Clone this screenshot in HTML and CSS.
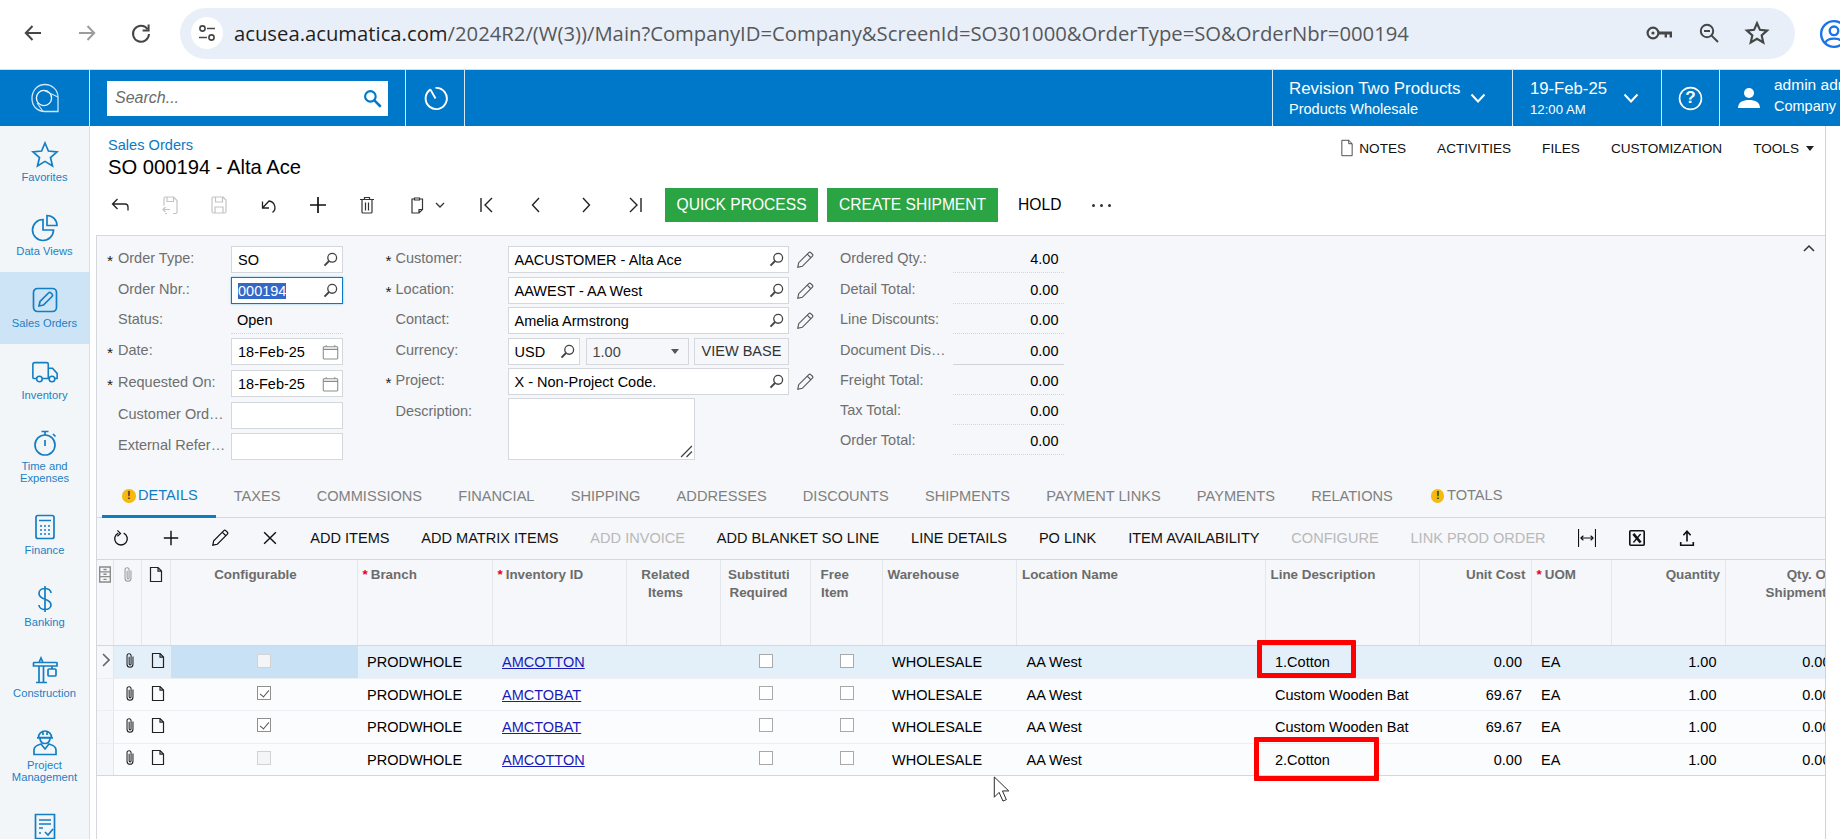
FILE: index.html
```html
<!DOCTYPE html>
<html lang="en">
<head>
<meta charset="utf-8">
<title>SO 000194 - Alta Ace</title>
<link rel="stylesheet" href="styles.css">
</head>
<body>
<svg class="sprite" aria-hidden="true">
  <symbol id="i-search" viewBox="0 0 16 16"><circle cx="9.8" cy="6.2" r="4.7" fill="none" stroke="currentColor" stroke-width="1.4"/><path d="M6.4 9.6 1.6 14.6" stroke="currentColor" stroke-width="2" fill="none"/></symbol>
  <symbol id="i-pencil" viewBox="0 0 16 16"><path d="M1.600 14.400 2.400 10.400 11.400 1.400a1.200 1.200 0 0 1 1.700 0l1.500 1.500a1.200 1.200 0 0 1 0 1.700L5.600 13.600Z M10 2.800 13.200 6" fill="none" stroke="currentColor" stroke-width="1"/></symbol>
  <symbol id="i-clip" viewBox="0 0 12 16"><path d="M8.800 4.200v7.400a2.800 2.800 0 0 1-5.600 0V3.600a1.900 1.900 0 0 1 3.800 0v7.600a.9.9 0 0 1-1.800 0V4.500" fill="none" stroke="currentColor" stroke-width="1"/></symbol>
  <symbol id="i-doc" viewBox="0 0 14 16"><path d="M1.500 1h7.600l3.400 3.600V15h-11Z M9 1v3.700h3.500" fill="none" stroke="currentColor" stroke-width="1.200"/></symbol>
  <symbol id="i-cal" viewBox="0 0 16 16"><path d="M2 3.500h12a.8.8 0 0 1 .8.8v9.900a.8.8 0 0 1-.8.8H2a.8.8 0 0 1-.8-.8V4.300a.8.8 0 0 1 .8-.8Z M1.200 6h13.600 M4 2v1.500M12 2v1.500" fill="none" stroke="currentColor" stroke-width="1"/></symbol>
</svg>

<header class="browser">
  <svg class="bi bi-back" viewBox="0 0 24 24"><path d="M20 12H5M11.500 5 4.800 12l6.700 7" fill="none" stroke="#444746" stroke-width="2"/></svg>
  <svg class="bi bi-fwd" viewBox="0 0 24 24"><path d="M4 12h15M12.500 5l6.700 7-6.700 7" fill="none" stroke="#9a9c9e" stroke-width="2"/></svg>
  <svg class="bi bi-reload" viewBox="0 0 24 24"><path d="M18.600 8.200A8 8 0 1 0 20 13" fill="none" stroke="#444746" stroke-width="2"/><path d="M19.600 3.600v6h-6" fill="none" stroke="#444746" stroke-width="2"/></svg>
  <div class="pill">
    <span class="tune"><svg viewBox="0 0 20 20" width="20" height="20"><circle cx="5.500" cy="5.500" r="2.600" fill="none" stroke="#444746" stroke-width="1.600"/><path d="M10 5.500h8M2 14.500h8" stroke="#444746" stroke-width="1.600"/><circle cx="14.500" cy="14.500" r="2.600" fill="none" stroke="#444746" stroke-width="1.600"/></svg></span>
    <span class="url"><span class="host">acusea.acumatica.com</span>/2024R2/(W(3))/Main?CompanyID=Company&amp;ScreenId=SO301000&amp;OrderType=SO&amp;OrderNbr=000194</span>
    <span class="pill-icons">
      <svg viewBox="0 0 28 20" width="28" height="20"><circle cx="7" cy="10" r="5.400" fill="none" stroke="#444746" stroke-width="2.200"/><circle cx="7" cy="10" r="1.600" fill="#444746"/><path d="M12 8.400h14v6h-2.400v-3H21v3h-2.400v-3H12Z" fill="#444746"/></svg>
      <svg viewBox="0 0 24 24" width="24" height="24"><circle cx="10" cy="10" r="6.200" fill="none" stroke="#444746" stroke-width="2"/><path d="M7 10h6M14.600 14.600 21 21" stroke="#444746" stroke-width="2"/></svg>
      <svg viewBox="0 0 24 24" width="26" height="26"><path d="m12 3 2.700 6.100 6.600.7-5 4.400 1.500 6.500L12 17.300l-5.800 3.400 1.500-6.500-5-4.400 6.600-.7Z" fill="none" stroke="#444746" stroke-width="2"/></svg>
    </span>
  </div>
  <svg class="bi bi-profile" viewBox="0 0 28 28"><circle cx="14" cy="14" r="12" fill="none" stroke="#1a73e8" stroke-width="2.200"/><circle cx="14" cy="11" r="4" fill="none" stroke="#1a73e8" stroke-width="2.200"/><path d="M6 22c2-5 14-5 16 0" fill="none" stroke="#1a73e8" stroke-width="2.200"/></svg>
</header>

<nav class="topbar">
  <div class="tb-logo"><svg viewBox="0 0 32 30" width="32" height="30"><path d="M16 1.500C8 1.500 3 8 3 15.500S8 28.500 16 28.500H29V14C29 7 23 1.500 16 1.500Z" fill="none" stroke="#cfe6f7" stroke-width="1.300"/><circle cx="15" cy="15" r="7.600" fill="none" stroke="#fff" stroke-width="1.300"/><path d="M15 7.400 29 14M8 20l6 8.400" fill="none" stroke="#cfe6f7" stroke-width="1.100"/></svg></div>
  <div class="tb-search">
    <div class="search-box"><span class="search-ph">Search...</span><svg viewBox="0 0 18 18" width="19" height="19"><circle cx="7" cy="7" r="5" fill="none" stroke="#0078c9" stroke-width="2"/><path d="m10.800 10.800 6 6" stroke="#0078c9" stroke-width="2.400"/></svg></div>
  </div>
  <div class="tb-clock"><svg viewBox="0 0 28 28" width="27" height="27"><path d="M9 4.600A11 11 0 1 0 14 3" fill="none" stroke="#fff" stroke-width="2"/><path d="M8.800 4.800 14 14" stroke="#fff" stroke-width="2"/></svg></div>
  <div class="tb-spacer"></div>
  <div class="tb-company">
    <div class="tb-two"><span class="tb-big">Revision Two Products</span><span class="tb-small">Products Wholesale</span></div>
    <svg class="chev" viewBox="0 0 16 10" width="16" height="10"><path d="m1.500 1.500 6.500 7 6.500-7" fill="none" stroke="#fff" stroke-width="2"/></svg>
  </div>
  <div class="tb-date">
    <div class="tb-two"><span class="tb-date-big">19-Feb-25</span><span class="tb-time">12:00 AM</span></div>
    <svg class="chev" viewBox="0 0 16 10" width="16" height="10"><path d="m1.500 1.500 6.500 7 6.500-7" fill="none" stroke="#fff" stroke-width="2"/></svg>
  </div>
  <div class="tb-help"><svg viewBox="0 0 24 24" width="25" height="25"><circle cx="12" cy="12" r="10.500" fill="none" stroke="#fff" stroke-width="1.600"/></svg><span class="tb-q">?</span></div>
  <div class="tb-user">
    <svg class="tb-user-ico" viewBox="0 0 24 24" width="24" height="24"><circle cx="12" cy="7" r="5" fill="#fff"/><path d="M1 22c0-6 5-8 11-8s11 2 11 8Z" fill="#fff"/></svg>
    <div class="tb-two tb-user-text"><span class="tb-admin">admin admin</span><span class="tb-company-name">Company</span></div>
  </div>
</nav>

<div class="app">
  <aside class="side">
    <a class="side-item side-fav"><svg class="side-ico" viewBox="0 0 28 28"><path d="m14 2 3.400 8 8.600.8-6.500 5.700 2 8.500L14 20.400 6.500 25l2-8.500L2 10.800l8.600-.8Z"/></svg><span>Favorites</span></a>
    <a class="side-item"><svg class="side-ico" viewBox="0 0 28 28"><path d="M12 5.500a10.500 10.500 0 1 0 10.500 10.500H12Z M16 1.500a10 10 0 0 1 10 10H16Z"/></svg><span>Data Views</span></a>
    <a class="side-item side-active"><svg class="side-ico" viewBox="0 0 28 28"><rect x="2.500" y="2.500" width="23" height="23" rx="4"/><path d="m8 20 1-4.500 8.500-8.500a1.800 1.800 0 0 1 2.500 0l1 1a1.800 1.800 0 0 1 0 2.500L12.500 19Z"/></svg><span>Sales Orders</span></a>
    <a class="side-item"><svg class="side-ico" viewBox="0 0 30 28"><path d="M6 21H3.500A1.500 1.500 0 0 1 2 19.500V6a2 2 0 0 1 2-2h13a1.500 1.500 0 0 1 1.500 1.500V21H12 M18.500 10h4.500l5 5.500V21h-2.500"/><circle cx="9" cy="21.500" r="3"/><circle cx="22.500" cy="21.500" r="3"/></svg><span>Inventory</span></a>
    <a class="side-item"><svg class="side-ico" viewBox="0 0 28 28"><circle cx="14" cy="16" r="10"/><path d="M10.500 2.500h7M14 2.500V6M22 5l2.500 2.500M14 11v6"/></svg><span>Time and<br>Expenses</span></a>
    <a class="side-item"><svg class="side-ico" viewBox="0 0 28 28"><rect x="5" y="2.500" width="18" height="23" rx="2"/><path d="M8 7.500h12M9 13h2M13 13h2M17 13h2M9 17h2M13 17h2M17 17h2M9 21h2M13 21h2M17 21h2"/></svg><span>Finance</span></a>
    <a class="side-item"><svg class="side-ico" viewBox="0 0 28 28"><path d="M20 8c0-3-3-4.500-6-4.500S8 5 8 8.500c0 7 12 4.500 12 11.500 0 3-3 4.500-6 4.500S8 23 8 20M14 1v26"/></svg><span>Banking</span></a>
    <a class="side-item"><svg class="side-ico" viewBox="0 0 28 28"><path d="M3 6.500h22.500a.5.5 0 0 1 .5.500v3H2.500V7ZM8 6.500 10 2l2 4.500M8 10v16M12.500 10v16M5 26.500h11M21 10v3"/><rect x="17" y="13" width="8" height="7" rx="1"/></svg><span>Construction</span></a>
    <a class="side-item"><svg class="side-ico" viewBox="0 0 28 28"><path d="M7.500 9.500a6.500 6.500 0 0 1 13 0ZM6 9.800h16M12 3.200V7M16 3.200V7M9 10.500a5 5 0 0 0 10 0M3 26.500v-4.500c0-3.500 3-5 7-6l4 5 4-5c4 1 7 2.500 7 6v4.500Z"/></svg><span>Project<br>Management</span></a>
    <a class="side-item"><svg class="side-ico" viewBox="0 0 28 28"><path d="M4.500 2.500h19v24h-19ZM8 8h12M8 12h12M8 16h4M8 21h2M14 20l3 3 5-6"/></svg></a>
  </aside>

  <main class="main">
    <div class="page-head">
      <div class="crumbs">
        <a class="crumb">Sales Orders</a>
        <h1 class="title">SO 000194 - Alta Ace</h1>
      </div>
      <div class="head-links">
        <svg class="ico-notes" viewBox="0 0 14 20" width="12" height="18"><path d="M1 1h8l4 4v14H1Z M9 1v4h4" fill="none" stroke="#333" stroke-width="1"/></svg>
        <span class="notes-txt">NOTES</span><span>ACTIVITIES</span><span>FILES</span><span>CUSTOMIZATION</span><span class="tools">TOOLS</span><span class="tools-caret"></span>
      </div>
    </div>

    <div class="toolbar">
      <svg class="tb-i" viewBox="0 0 20 20"><path d="M18 15.500V12a3 3 0 0 0-3-3H2.500M7.500 4 2.500 9l5 5" fill="none" stroke="#222" stroke-width="1.300"/></svg>
      <svg class="tb-i" viewBox="0 0 20 20"><path d="M4 10.500V3.500A1.500 1.500 0 0 1 5.500 2h8L17 5.500V17a1.500 1.500 0 0 1-1.500 1.500H13M7 2v4.500h6.500V2M3 14.500h7M5.500 12 3 14.500 5.500 17M5 18.500h2" fill="none" stroke="#c4c4c4" stroke-width="1.200"/></svg>
      <svg class="tb-i" viewBox="0 0 20 20"><path d="M4.500 2H14l3 3v11.500a1.500 1.500 0 0 1-1.500 1.500h-11A1.500 1.500 0 0 1 3 16.500v-13A1.500 1.500 0 0 1 4.500 2Z M6.500 2v5h7V2 M6 18v-6h8v6" fill="none" stroke="#c4c4c4" stroke-width="1.200"/></svg>
      <svg class="tb-i" viewBox="0 0 20 20"><path d="M3.500 6.500V13H10M3.500 13 10 6a6.500 6.500 0 0 1 3.500 11.500" fill="none" stroke="#222" stroke-width="1.300"/></svg>
      <svg class="tb-i" viewBox="0 0 20 20"><path d="M10 2v16M2 10h16" stroke="#111" stroke-width="1.700"/></svg>
      <svg class="tb-i" viewBox="0 0 20 20"><path d="M3 4.500h14M7.500 4.500V2.500h5v2M5 4.500h10v12.500a1 1 0 0 1-1 1H6a1 1 0 0 1-1-1ZM8.500 7.500v8M11.500 7.500v8" fill="none" stroke="#333" stroke-width="1.200"/></svg>
      <div class="tb-paste">
        <svg class="tb-i" viewBox="0 0 20 20"><path d="M7.500 3h5v2h-5ZM7.500 4H5v14h7l3.500-3.500V4h-3M12 18v-3.500h3.500" fill="none" stroke="#333" stroke-width="1.200"/></svg>
        <svg class="tb-small-chev" viewBox="0 0 10 6" width="10" height="6"><path d="m1 1 4 4 4-4" fill="none" stroke="#333" stroke-width="1.300"/></svg>
      </div>
      <svg class="tb-i" viewBox="0 0 20 20"><path d="M4 3v14M15 3 8 10l7 7" fill="none" stroke="#222" stroke-width="1.400"/></svg>
      <svg class="tb-i" viewBox="0 0 20 20"><path d="M13 3 6.500 10l6.500 7" fill="none" stroke="#222" stroke-width="1.400"/></svg>
      <svg class="tb-i" viewBox="0 0 20 20"><path d="m7 3 6.500 7L7 17" fill="none" stroke="#222" stroke-width="1.400"/></svg>
      <svg class="tb-i" viewBox="0 0 20 20"><path d="M16 3v14M5 3l7 7-7 7" fill="none" stroke="#222" stroke-width="1.400"/></svg>
      <button class="btn-green btn-quick">QUICK PROCESS</button>
      <button class="btn-green btn-ship">CREATE SHIPMENT</button>
      <span class="tb-hold">HOLD</span>
      <span class="tb-dots"><i></i><i></i><i></i></span>
    </div>

    <section class="panel">
      <div class="form">
        <div class="col col-a">
          <div class="row"><span class="star">*</span><label class="lbl">Order Type:</label><div class="fld"><span class="fv">SO</span><svg class="f-ico"><use href="#i-search"/></svg></div></div>
          <div class="row"><span class="star"></span><label class="lbl">Order Nbr.:</label><div class="fld fld-focus"><span class="fv"><span class="sel">000194</span></span><svg class="f-ico"><use href="#i-search"/></svg></div></div>
          <div class="row"><span class="star"></span><label class="lbl">Status:</label><div class="fld-ro">Open</div></div>
          <div class="row"><span class="star">*</span><label class="lbl">Date:</label><div class="fld"><span class="fv">18-Feb-25</span><svg class="f-ico f-cal"><use href="#i-cal"/></svg></div></div>
          <div class="row"><span class="star">*</span><label class="lbl">Requested On:</label><div class="fld"><span class="fv">18-Feb-25</span><svg class="f-ico f-cal"><use href="#i-cal"/></svg></div></div>
          <div class="row"><span class="star"></span><label class="lbl">Customer Order Nbr.:</label><div class="fld"></div></div>
          <div class="row"><span class="star"></span><label class="lbl">External Reference:</label><div class="fld"></div></div>
        </div>
        <div class="col col-b">
          <div class="row"><span class="star">*</span><label class="lbl">Customer:</label><div class="fld"><span class="fv">AACUSTOMER - Alta Ace</span><svg class="f-ico"><use href="#i-search"/></svg></div><svg class="pen"><use href="#i-pencil"/></svg></div>
          <div class="row"><span class="star">*</span><label class="lbl">Location:</label><div class="fld"><span class="fv">AAWEST - AA West</span><svg class="f-ico"><use href="#i-search"/></svg></div><svg class="pen"><use href="#i-pencil"/></svg></div>
          <div class="row"><span class="star"></span><label class="lbl">Contact:</label><div class="fld"><span class="fv">Amelia Armstrong</span><svg class="f-ico"><use href="#i-search"/></svg></div><svg class="pen"><use href="#i-pencil"/></svg></div>
          <div class="row"><span class="star"></span><label class="lbl">Currency:</label>
            <div class="cur">
              <div class="fld"><span class="fv">USD</span><svg class="f-ico"><use href="#i-search"/></svg></div>
              <div class="fld fld-rate"><span class="fv fv-gray">1.00</span><span class="caret"></span></div>
              <div class="fld-btn">VIEW BASE</div>
            </div>
          </div>
          <div class="row"><span class="star">*</span><label class="lbl">Project:</label><div class="fld"><span class="fv">X - Non-Project Code.</span><svg class="f-ico"><use href="#i-search"/></svg></div><svg class="pen"><use href="#i-pencil"/></svg></div>
          <div class="row row-desc"><span class="star"></span><label class="lbl">Description:</label><div class="area"><svg class="grip" viewBox="0 0 12 12" width="13" height="13"><path d="M1 11 11 1M6 11l5-5" stroke="#444" stroke-width="1.200"/></svg></div></div>
        </div>
        <div class="col col-c">
          <div class="row"><label class="lbl">Ordered Qty.:</label><div class="val">4.00</div></div>
          <div class="row"><label class="lbl">Detail Total:</label><div class="val">0.00</div></div>
          <div class="row"><label class="lbl">Line Discounts:</label><div class="val">0.00</div></div>
          <div class="row"><label class="lbl">Document Discounts:</label><div class="val val-solid">0.00</div></div>
          <div class="row"><label class="lbl">Freight Total:</label><div class="val">0.00</div></div>
          <div class="row"><label class="lbl">Tax Total:</label><div class="val">0.00</div></div>
          <div class="row"><label class="lbl">Order Total:</label><div class="val">0.00</div></div>
        </div>
        <svg class="collapse" viewBox="0 0 12 8" width="12" height="8"><path d="m1 7 5-5 5 5" fill="none" stroke="#333" stroke-width="1.500"/></svg>
      </div>

      <div class="tabs">
        <a class="tab tab-on"><span class="warn">!</span>DETAILS</a>
        <a class="tab">TAXES</a><a class="tab">COMMISSIONS</a><a class="tab">FINANCIAL</a><a class="tab">SHIPPING</a><a class="tab">ADDRESSES</a><a class="tab">DISCOUNTS</a><a class="tab">SHIPMENTS</a><a class="tab">PAYMENT LINKS</a><a class="tab">PAYMENTS</a><a class="tab">RELATIONS</a>
        <a class="tab tab-warn"><span class="warn">!</span>TOTALS</a>
      </div>

      <div class="gridbar">
        <svg class="gb-i" viewBox="0 0 20 20"><path d="M7 4.500A7 7 0 1 0 13 4.500" fill="none" stroke="#111" stroke-width="1.500"/><path d="M6 1.500 9.500 5 6 8" fill="none" stroke="#111" stroke-width="1.300"/></svg>
        <svg class="gb-i" viewBox="0 0 20 20"><path d="M10 2v16M2 10h16" stroke="#111" stroke-width="1.600"/></svg>
        <svg class="gb-i gb-pen" viewBox="0 0 16 16"><path d="M1.600 14.400 2.400 10.400 11.400 1.400a1.200 1.200 0 0 1 1.700 0l1.500 1.500a1.200 1.200 0 0 1 0 1.700L5.600 13.600Z M10 2.800 13.200 6" fill="none" stroke="#111" stroke-width="1.100"/></svg>
        <svg class="gb-i gb-last" viewBox="0 0 20 20"><path d="m3.500 3.500 13 13M16.500 3.500l-13 13" stroke="#111" stroke-width="1.600"/></svg>
        <span>ADD ITEMS</span><span>ADD MATRIX ITEMS</span><span class="off">ADD INVOICE</span><span>ADD BLANKET SO LINE</span><span>LINE DETAILS</span><span>PO LINK</span><span>ITEM AVAILABILITY</span><span class="off">CONFIGURE</span><span class="off">LINK PROD ORDER</span>
        <svg class="gb-i gb-fit" viewBox="0 0 20 20"><path d="M.6 0v20M19.400 0v20M3 10h14M3 10l3-2.500M3 10l3 2.500M17 10l-3-2.500M17 10l-3 2.500" fill="none" stroke="#111" stroke-width="1.200"/></svg>
        <svg class="gb-i gb-xls" viewBox="0 0 20 20"><rect x="2" y="2" width="16" height="16" rx="1" fill="none" stroke="#111" stroke-width="1.800"/><path d="m6 5.500 8 9.500" stroke="#111" stroke-width="3"/><path d="m14 5.500-8 9.500" stroke="#111" stroke-width="1.500"/></svg>
        <svg class="gb-i" viewBox="0 0 20 20"><path d="M10 14V3M6 7l4-4.500L14 7M3 14.500V18h14v-3.500" fill="none" stroke="#111" stroke-width="1.800"/></svg>
      </div>
    </section>

    <section class="grid">
      <div class="gh grow">
        <div class="gc gc-ic"><svg class="ic-h" viewBox="0 0 12 16"><path d="M1 1h10v14H1ZM1 5.500h10M1 10h10M4.500 3.300h3M4.500 7.800h3M4.500 12.600h3" fill="none" stroke="#8b8b8b" stroke-width="1.300"/></svg></div>
        <div class="gc gc-ic"><svg class="ic-h ic-gray"><use href="#i-clip"/></svg></div>
        <div class="gc gc-ic"><svg class="ic-h"><use href="#i-doc"/></svg></div>
        <div class="gc gc-c">Configurable</div>
        <div class="gc"><em>*</em>Branch</div>
        <div class="gc"><em>*</em>Inventory ID</div>
        <div class="gc gc-c">Related<br>Items</div>
        <div class="gc gc-c gc-clip"><span class="gc-in">Substitution<br>Required</span></div>
        <div class="gc gc-c gc-free">Free<br>Item</div>
        <div class="gc">Warehouse</div>
        <div class="gc">Location Name</div>
        <div class="gc">Line Description</div>
        <div class="gc gc-r">Unit Cost</div>
        <div class="gc"><em>*</em>UOM</div>
        <div class="gc gc-r">Quantity</div>
        <div class="gc gc-r">Qty. On<br>Shipments</div>
      </div>

      <div class="gr grow gr-on">
        <div class="cell cell-gut"><svg class="chev-r" viewBox="0 0 8 14" width="8" height="14"><path d="m1 1 6 6-6 6" fill="none" stroke="#666" stroke-width="1.600"/></svg></div>
        <div class="cell cell-ic"><svg class="ic-r"><use href="#i-clip"/></svg></div>
        <div class="cell cell-ic"><svg class="ic-r"><use href="#i-doc"/></svg></div>
        <div class="cell cell-ck cell-sel"><span class="ck ck-dis"></span></div>
        <div class="cell">PRODWHOLE</div>
        <div class="cell"><a class="lnk">AMCOTTON</a></div>
        <div class="cell"></div>
        <div class="cell cell-ck"><span class="ck"></span></div>
        <div class="cell cell-ck"><span class="ck"></span></div>
        <div class="cell">WHOLESALE</div>
        <div class="cell">AA West</div>
        <div class="cell">1.Cotton</div>
        <div class="cell cell-r">0.00</div>
        <div class="cell">EA</div>
        <div class="cell cell-r">1.00</div>
        <div class="cell cell-r">0.00</div>
      </div>
      <div class="gr grow">
        <div class="cell cell-gut"></div>
        <div class="cell cell-ic"><svg class="ic-r"><use href="#i-clip"/></svg></div>
        <div class="cell cell-ic"><svg class="ic-r"><use href="#i-doc"/></svg></div>
        <div class="cell cell-ck"><span class="ck ck-on"></span></div>
        <div class="cell">PRODWHOLE</div>
        <div class="cell"><a class="lnk">AMCTOBAT</a></div>
        <div class="cell"></div>
        <div class="cell cell-ck"><span class="ck"></span></div>
        <div class="cell cell-ck"><span class="ck"></span></div>
        <div class="cell">WHOLESALE</div>
        <div class="cell">AA West</div>
        <div class="cell">Custom Wooden Bat</div>
        <div class="cell cell-r">69.67</div>
        <div class="cell">EA</div>
        <div class="cell cell-r">1.00</div>
        <div class="cell cell-r">0.00</div>
      </div>
      <div class="gr grow">
        <div class="cell cell-gut"></div>
        <div class="cell cell-ic"><svg class="ic-r"><use href="#i-clip"/></svg></div>
        <div class="cell cell-ic"><svg class="ic-r"><use href="#i-doc"/></svg></div>
        <div class="cell cell-ck"><span class="ck ck-on"></span></div>
        <div class="cell">PRODWHOLE</div>
        <div class="cell"><a class="lnk">AMCTOBAT</a></div>
        <div class="cell"></div>
        <div class="cell cell-ck"><span class="ck"></span></div>
        <div class="cell cell-ck"><span class="ck"></span></div>
        <div class="cell">WHOLESALE</div>
        <div class="cell">AA West</div>
        <div class="cell">Custom Wooden Bat</div>
        <div class="cell cell-r">69.67</div>
        <div class="cell">EA</div>
        <div class="cell cell-r">1.00</div>
        <div class="cell cell-r">0.00</div>
      </div>
      <div class="gr grow gr-last">
        <div class="cell cell-gut"></div>
        <div class="cell cell-ic"><svg class="ic-r"><use href="#i-clip"/></svg></div>
        <div class="cell cell-ic"><svg class="ic-r"><use href="#i-doc"/></svg></div>
        <div class="cell cell-ck"><span class="ck ck-dis"></span></div>
        <div class="cell">PRODWHOLE</div>
        <div class="cell"><a class="lnk">AMCOTTON</a></div>
        <div class="cell"></div>
        <div class="cell cell-ck"><span class="ck"></span></div>
        <div class="cell cell-ck"><span class="ck"></span></div>
        <div class="cell">WHOLESALE</div>
        <div class="cell">AA West</div>
        <div class="cell">2.Cotton</div>
        <div class="cell cell-r">0.00</div>
        <div class="cell">EA</div>
        <div class="cell cell-r">1.00</div>
        <div class="cell cell-r">0.00</div>
      </div>
    </section>
  </main>
</div>

<div class="mark mark-1"></div>
<div class="mark mark-2"></div>
<svg class="pointer" viewBox="0 0 18 28" width="18" height="27"><path d="M1 1v21l5-5 4 9 3.500-1.500-4-9H16Z" fill="#fff" stroke="#222" stroke-width="1"/></svg>
</body>
</html>
```

FILE: styles.css
```css
* { box-sizing: border-box; }
html, body { margin: 0; padding: 0; height: 839px; width: 1840px; overflow: hidden; background: #fff; }
body { font-family: "Liberation Sans", Arial, sans-serif; font-size: 14.5px; color: #000; position: relative; }
.sprite { display: none; }
a { text-decoration: none; color: inherit; }

/* browser chrome */
.browser { height: 70px; display: flex; align-items: center; background: #fff; border-bottom: 1px solid #dcdcdc; overflow: hidden; }
.bi { width: 24px; height: 24px; flex: none; }
.bi-back { margin: 0 30px 3px 21px; }
.bi-fwd { margin: 0 30px 3px 0; }
.bi-reload { margin: 0 27px 3px 0; }
.pill { width: 1615px; height: 51px; margin-top: -3px; border-radius: 26px; background: #e9eff8; display: flex; align-items: center; padding-left: 11px; flex: none; }
.tune { width: 32px; height: 32px; border-radius: 50%; background: #fff; display: flex; align-items: center; justify-content: center; flex: none; }
.url { margin-left: 11px; font-family: "Open Sans", sans-serif; font-size: 20.250px; color: #55585c; white-space: nowrap; flex: none; width: 1172px; }
.host { color: #1f1f1f; }
.pill-icons { margin-left: 240px; display: flex; align-items: center; gap: 23px; flex: none; }
.bi-profile { width: 30px; height: 30px; margin: -2px 0 0 24px; flex: none; }

/* top bar */
.topbar { height: 56px; background: #0078c9; color: #fff; display: flex; }
.topbar > div { border-right: 1px solid #d5e9f7; display: flex; align-items: center; flex: none; }
.tb-logo { width: 90px; justify-content: center; }
.tb-search { width: 316px; padding-left: 17px; }
.search-box { width: 281px; height: 35px; background: #fff; display: flex; align-items: center; justify-content: space-between; padding: 0 6px 0 8px; }
.search-ph { font-style: italic; color: #6b6b6b; font-size: 16px; }
.tb-clock { width: 59px; justify-content: center; }
.topbar > .tb-spacer { flex: 1; }
.tb-company { width: 240px; padding-left: 16px; gap: 9.500px; }
.tb-date { width: 149px; padding-left: 17px; gap: 15.500px; }
.tb-help { width: 58px; justify-content: center; position: relative; }
.tb-q { position: absolute; left: 0; right: 0; top: 16px; text-align: center; font-size: 17px; font-weight: bold; line-height: 24px; }
.topbar > .tb-user { border-right: 0; width: 120px; padding-left: 17px; gap: 13px; overflow: hidden; }
.tb-user-ico { flex: none; }
.tb-two { display: flex; flex-direction: column; gap: 2px; flex: none; }
.tb-big { font-size: 16.900px; line-height: 20px; white-space: nowrap; }
.tb-small { font-size: 14.500px; line-height: 17px; white-space: nowrap; }
.tb-date-big { font-size: 16.700px; line-height: 20px; }
.tb-time { font-size: 13.200px; line-height: 17px; }
.tb-admin { font-size: 15.500px; line-height: 18px; white-space: nowrap; }
.tb-company-name { font-size: 14.500px; line-height: 17px; }
.tb-user-text { gap: 4px; margin-top: -6px; }
.chev { flex: none; }

/* app frame */
.app { display: flex; height: 713px; }
.side { width: 90px; flex: none; background: #f3f6f9; border-right: 1px solid #dadfe4; padding-top: 2.600px; overflow: hidden; }
.side-item { display: block; padding: 12px 0 14.700px; text-align: center; color: #1c80c4; font-size: 11.200px; line-height: 12px; }
.side-fav { padding: 10px 0 17.700px; }
.side-fav .side-ico { margin-bottom: 2px; }
.side-active { background: #cde4f6; }
.side-item span { display: block; }
.side-ico { display: block; width: 28px; height: 28px; margin: 2px auto 3px; fill: none; stroke: #147ec2; stroke-width: 1.700; }

.main { flex: none; width: 1730px; margin-left: 6px; border-right: 1px solid #cfd3d7; display: flex; flex-direction: column; }

/* page head */
.page-head { height: 62px; display: flex; justify-content: space-between; padding-left: 12px; flex: none; }
.crumb { display: block; color: #0b79c4; font-size: 14.600px; line-height: 17px; margin-top: 11px; }
.title { margin: 1px 0 0; font-size: 20.200px; font-weight: normal; line-height: 24px; }
.head-links { display: flex; align-items: center; gap: 31px; height: 44px; font-size: 13.600px; padding-right: 11px; color: #111; }
.ico-notes { margin-right: -25px; margin-left: -8px; }
.tools { margin-right: -24px; }
.tools-caret { width: 0; height: 0; border: 4px solid transparent; border-top: 5px solid #222; border-bottom: 0; }

/* main toolbar */
.toolbar { height: 34px; display: flex; align-items: center; flex: none; font-size: 15.600px; }
.tb-i { width: 20px; height: 20px; margin: 0 14.700px; flex: none; }
.toolbar > .tb-i:first-child { margin-left: 13.500px; margin-right: 15.700px; }
.tb-paste { width: 73px; display: flex; align-items: center; flex: none; margin-right: -3px; }
.tb-paste .tb-i { margin-right: 8px; }
.btn-green { height: 34px; border: 0; background: #2ba444; color: #fff; font: inherit; padding: 0; flex: none; }
.btn-quick { width: 153px; margin-left: 5.500px; }
.btn-ship { width: 171px; margin-left: 9px; }
.tb-hold { margin-left: 20px; }
.tb-dots { margin-left: 31px; display: flex; gap: 5px; }
.tb-dots i { width: 3px; height: 3px; background: #333; border-radius: 50%; }

/* panel */
.panel { margin-top: 13px; background: #f5f7fa; border-left: 1px solid #d4d8dd; border-top: 1px solid #d4d8dd; height: 324px; flex: none; }
.form { position: relative; display: flex; height: 242px; padding-top: 10px; color: #6e6e6e; }
.col { display: grid; flex: none; }
.col-a { width: 280.500px; margin-left: 10px; grid-template-rows: 31px 30px 31px 32px 32px 31px 27px; }
.col-b { width: 452.500px; grid-template-rows: 31px 30px 31px 30px 30px 62px; }
.col-c { width: 224px; grid-template-rows: 31px 30px 31px 30px 30px 30px 30px; }
.row { display: grid; height: 27px; align-items: center; }
.col-a .row { grid-template-columns: 11px 113px 111.500px; }
.col-b .row { grid-template-columns: 8px 112px 281.500px 32px; }
.col-c .row { grid-template-columns: 113px 111px; }
.star { font-size: 15.500px; color: #222; line-height: 14px; margin-top: 3px; }
.col-b .star { margin-left: -2px; }
.lbl { white-space: nowrap; overflow: hidden; text-overflow: ellipsis; padding-right: 5px; line-height: 20px; margin-top: -2.500px; color: #6f6f6f; }
.fld { height: 27px; background: #fff; border: 1px solid #d4d7dc; display: flex; align-items: center; justify-content: space-between; padding: 0 4px 0 6px; color: #000; }
.fv { white-space: nowrap; }
.fv-gray { color: #444; }
.fld-focus { border-color: #0a78c8; box-shadow: 0 0 2px #7cc0ee; }
.sel { background: #3367c8; color: #fff; }
.f-ico { width: 15px; height: 15px; color: #444; flex: none; }
.f-cal { width: 17px; height: 17px; color: #8b8b8b; margin-right: -1px; }
.fld-ro { padding-left: 6px; color: #000; height: 27px; line-height: 26px; border-bottom: 1px dotted #d6d6d6; }
.pen { width: 18px; height: 18px; color: #555; margin-left: 7px; }
.cur { display: flex; width: 281.500px; }
.cur .fld { width: 72px; flex: none; }
.cur .fld-rate { width: 103px; margin-left: 6px; background: transparent; }
.caret { width: 0; height: 0; border: 4.500px solid transparent; border-top: 5px solid #555; border-bottom: 0; margin-right: 5px; }
.fld-btn { flex: 1; margin-left: 5.500px; height: 27px; border: 1px solid #d4d7dc; color: #333; text-align: center; line-height: 25px; white-space: nowrap; }
.row-desc { height: 62px; align-items: start; }
.row-desc .lbl { margin-top: 3px; }
.area { width: 187px; height: 62px; background: #fff; border: 1px solid #d4d7dc; position: relative; }
.grip { position: absolute; right: 1px; bottom: 1px; }
.val { height: 27px; text-align: right; padding-right: 5.500px; color: #000; line-height: 26px; border-bottom: 1px dotted #d2d5d9; }
.val-solid { border-bottom: 1px solid #cfd3d8; }
.collapse { position: absolute; right: 10px; top: 8px; }

.tabs { height: 40px; display: flex; gap: 36.200px; padding-left: 5px; border-bottom: 1px solid #d4d8dd; color: #808080; font-size: 14.600px; }
.tab { position: relative; height: 40px; line-height: 37px; white-space: nowrap; display: flex; align-items: flex-start; }
.tab-on { color: #0f7dc2; width: 114px; padding-left: 20px; border-bottom: 3px solid #0f7dc2; margin-right: -18.500px; line-height: 35px; }
.tab-warn { line-height: 35px; margin-left: 2px; }
.warn { width: 13.500px; height: 13.500px; border-radius: 50%; background: #f6b90d; color: #333; font-size: 11px; font-weight: bold; line-height: 13.500px; text-align: center; margin: 11px 2.500px 0 0; flex: none; }

.gridbar { height: 41px; display: flex; align-items: center; gap: 31.800px; font-size: 14.570px; color: #111; padding-bottom: 1px; padding-left: 15px; }
.gridbar span { white-space: nowrap; }
.gridbar .gb-last { margin-right: -1px; }
.off { color: #b9b9b9; }
.gb-i { width: 18px; height: 18px; flex: none; }
.gb-pen { margin-left: -1px; margin-right: 1px; }
.gb-fit { margin-left: 1px; }

/* grid */
.grid { flex: 1; border-left: 1px solid #d4d8dd; border-top: 1px solid #d4d8dd; overflow: hidden; }
.grow { display: grid; grid-template-columns: 17px 28px 28.500px 187px 135px 134.500px 94px 90px 71.500px 134.500px 248.500px 154.500px 111.500px 80.500px 114px 114px; width: 1743px; }
.gh { height: 86px; background: #f5f7fa; border-bottom: 1px solid #d4d8dd; font-weight: bold; font-size: 13.400px; line-height: 18px; color: #6c6c6c; }
.gc { border-right: 1px solid #e3e6ea; padding: 6px 5px 0; white-space: nowrap; overflow: hidden; }
.gc em { color: #e4002b; font-style: normal; margin-right: 3px; }
.gc-c { text-align: center; padding-right: 21px; }
.gc-r { text-align: right; }
.gc-clip { padding-left: 7px; }
.gc-free { padding-right: 28px; }
.gc-in { display: block; overflow: hidden; }
.gc-ic { padding: 6px 0 0; text-align: center; }
.ic-h { width: 14px; height: 17px; color: #222; }
.ic-gray { color: #9b9b9b; }
.gr { height: 32.300px; background: #fbfcfd; border-bottom: 1px solid #eceef1; }
.gr-on { background: #e3f0fa; height: 33px; }
.gr-last { border-bottom: 1px solid #d4d8dd; }
.cell { padding: 0 9.500px; line-height: 33px; white-space: nowrap; overflow: hidden; min-width: 0; }
.cell-r { text-align: right; }
.cell-gut { background: #f5f7fa; padding: 0; border-right: 1px solid #e3e6ea; }
.cell-ic { padding: 0; display: flex; align-items: center; justify-content: center; }
.cell-ck { padding: 0; display: flex; justify-content: center; align-items: center; }
.cell-sel { background: #c8e1f5; }
.chev-r { display: block; margin: 7px 0 0 5px; }
.ic-r { width: 14px; height: 17px; color: #222; margin: -3px 0 0 4px; }
.ck { width: 14px; height: 14px; border: 1px solid #a9a9a9; background: #fff; margin-top: -3px; position: relative; }
.ck-dis { border-color: #d2d2d2; background: #f4f5f6; }
.ck-on { border-color: #8f8f8f; }
.ck-on::after { content: ""; position: absolute; left: 3.500px; top: 1px; width: 4px; height: 8px; border: solid #555; border-width: 0 1.300px 1.300px 0; transform: rotate(40deg); }
.lnk { color: #1a1ab8; text-decoration: underline; }

/* annotations over the screenshot */
.mark { position: absolute; border: 5px solid #f00; border-radius: 1px; }
.mark-1 { left: 1257px; top: 640px; width: 99px; height: 38px; }
.mark-2 { left: 1254px; top: 737px; width: 125px; height: 44px; }
.pointer { position: absolute; left: 993px; top: 776px; }
```
